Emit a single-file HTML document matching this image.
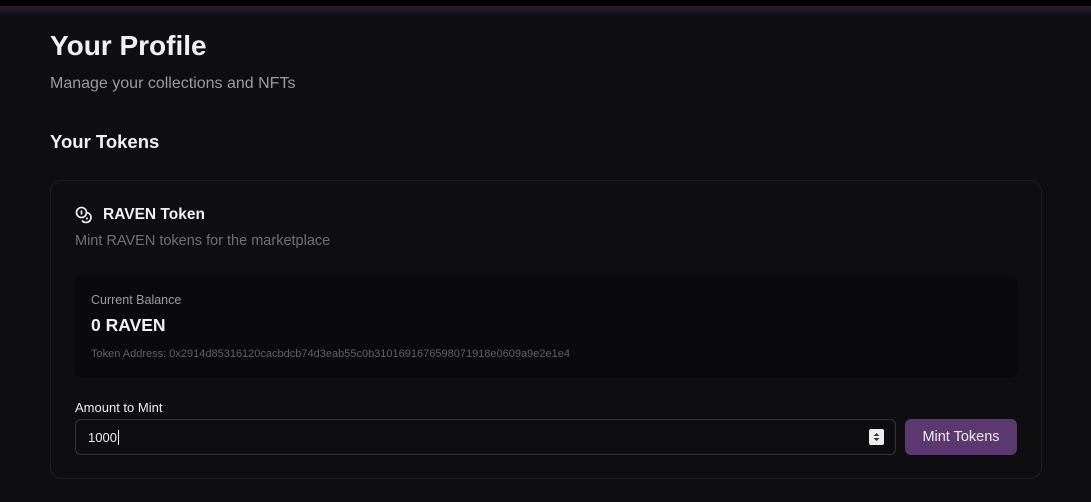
<!DOCTYPE html>
<html><head><style>
*{box-sizing:border-box;margin:0;padding:0}
body{width:1091px;height:502px;overflow:hidden;background:#0e0e11;font-family:"Liberation Sans",sans-serif;position:relative}
.top{position:absolute;left:0;top:0;width:1091px;height:6px;background:#000}
.band{position:absolute;left:0;top:6px;width:1091px;height:10px;background:linear-gradient(#2a1f33,#0e0e11)}
.t{position:absolute;white-space:nowrap}
.card{position:absolute;left:50px;top:180px;width:992px;height:299px;border:1px solid #1f1d24;border-radius:12px}
.bal{position:absolute;left:75px;top:276px;width:943px;height:102px;background:#0a0a0c;border-radius:8px}
.inp{position:absolute;left:75px;top:419px;width:821px;height:36px;border:1px solid #34333a;border-radius:6px}
.btn{position:absolute;left:905px;top:419px;width:112px;height:36px;background:#5c3871;border-radius:6px;color:#eee;font-size:14.5px;text-align:center;line-height:36px}
</style></head><body>
<div class="top"></div><div class="band"></div>
<div class="t" style="left:50px;top:30px;font-size:28px;font-weight:bold;color:#f2f2f2">Your Profile</div>
<div class="t" style="left:50px;top:75px;font-size:16px;color:#9a9aa6">Manage your collections and NFTs</div>
<div class="t" style="left:50px;top:131px;font-size:18.5px;font-weight:bold;color:#f2f2f2">Your Tokens</div>
<div class="card"></div>
<svg style="position:absolute;left:75px;top:206px" width="20" height="18" viewBox="0 0 20 18" fill="none" stroke="#fff" stroke-width="1.6"><circle cx="6.5" cy="6.5" r="5"/><path d="M6.5 4.5v4"/><path d="M11.5 6.5a5 5 0 1 1-4.5 8"/><path d="M12 11.5v2"/></svg>
<div class="t" style="left:103px;top:206px;font-size:15.5px;font-weight:bold;color:#f2f2f2">RAVEN Token</div>
<div class="t" style="left:75px;top:233px;font-size:14.5px;color:#6f6f78">Mint RAVEN tokens for the marketplace</div>
<div class="bal"></div>
<div class="t" style="left:91px;top:293px;font-size:12.5px;color:#9a9aa6">Current Balance</div>
<div class="t" style="left:91px;top:315px;font-size:17.5px;font-weight:bold;color:#f2f2f2">0 RAVEN</div>
<div class="t" style="left:91px;top:348px;font-size:11px;color:#5f5f68">Token Address: 0x2914d85316120cacbdcb74d3eab55c0b3101691676598071918e0609a9e2e1e4</div>
<div class="t" style="left:75px;top:400px;font-size:13px;color:#eee">Amount to Mint</div>
<div class="inp"></div>
<div class="t" style="left:88px;top:430px;font-size:13px;color:#eee">1000<span style="border-left:1px solid #fff;margin-left:1px"></span></div>
<div style="position:absolute;left:869px;top:429px;width:15px;height:16px;background:#eee;border-radius:2px"><svg width="15" height="16"><path d="M4.5 7L7.5 4L10.5 7Z M4.5 9L7.5 12L10.5 9Z" fill="#333"/></svg></div>
<div class="btn">Mint Tokens</div>
</body></html>
